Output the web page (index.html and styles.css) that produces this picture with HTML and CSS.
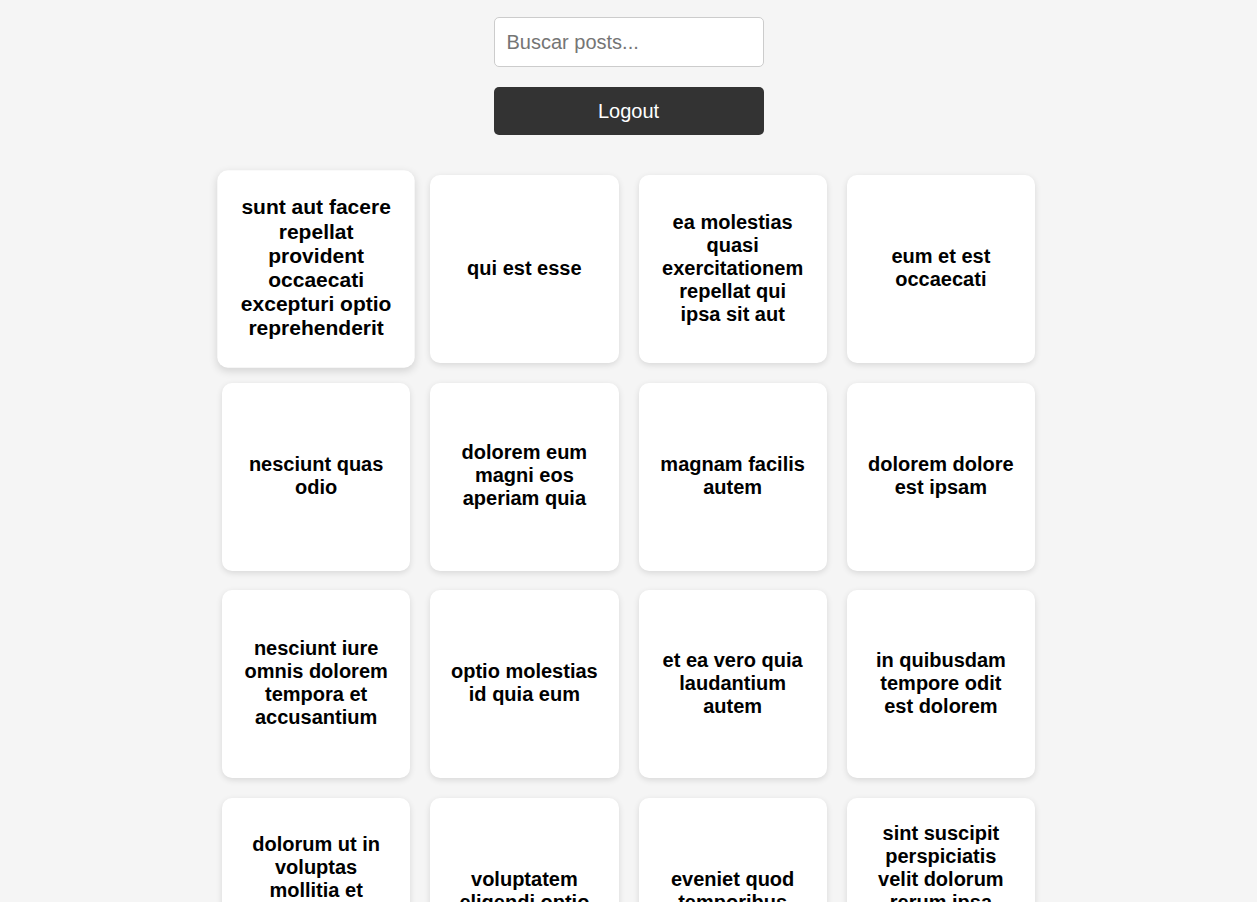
FILE: index.html
```html
<!DOCTYPE html>
<html lang="es">
<head>
<meta charset="utf-8">
<title>Posts</title>
<link rel="stylesheet" href="styles.css">
</head>
<body>
<div class="app">
  <div class="toolbar">
    <input class="search" type="text" placeholder="Buscar posts...">
    <button class="logout" type="button">Logout</button>
  </div>
  <div class="grid">
    <div class="card is-hover"><h2>sunt aut facere repellat provident occaecati excepturi optio reprehenderit</h2></div>
    <div class="card"><h2>qui est esse</h2></div>
    <div class="card"><h2>ea molestias quasi exercitationem repellat qui ipsa sit aut</h2></div>
    <div class="card"><h2>eum et est occaecati</h2></div>
    <div class="card"><h2>nesciunt quas odio</h2></div>
    <div class="card"><h2>dolorem eum magni eos aperiam quia</h2></div>
    <div class="card"><h2>magnam facilis autem</h2></div>
    <div class="card"><h2>dolorem dolore est ipsam</h2></div>
    <div class="card"><h2>nesciunt iure omnis dolorem tempora et accusantium</h2></div>
    <div class="card"><h2>optio molestias id quia eum</h2></div>
    <div class="card"><h2>et ea vero quia laudantium autem</h2></div>
    <div class="card"><h2>in quibusdam tempore odit est dolorem</h2></div>
    <div class="card"><h2>dolorum ut in voluptas mollitia et saepe quo animi</h2></div>
    <div class="card"><h2>voluptatem eligendi optio</h2></div>
    <div class="card"><h2>eveniet quod temporibus</h2></div>
    <div class="card"><h2>sint suscipit perspiciatis velit dolorum rerum ipsa laboriosam odio</h2></div>
    <div class="card"><h2>fugit voluptas sed molestias voluptatem provident</h2></div>
    <div class="card"><h2>voluptate et itaque vero tempora molestiae</h2></div>
    <div class="card"><h2>adipisci placeat illum aut reiciendis qui</h2></div>
    <div class="card"><h2>doloribus ad provident suscipit at</h2></div>
  </div>
</div>
</body>
</html>
```

FILE: styles.css
```css
html, body {
  margin: 0;
  padding: 0;
  background: #f5f5f5;
  font-family: "Liberation Sans", Arial, sans-serif;
}

.app {
  display: flex;
  flex-direction: column;
  align-items: center;
  padding-top: 17px;
  padding-bottom: 40px;
}

.toolbar {
  display: flex;
  flex-direction: column;
  align-items: center;
  gap: 20px;
  margin-bottom: 40px;
}

.search {
  box-sizing: border-box;
  width: 270px;
  height: 50px;
  padding: 0 12px;
  border: 1px solid #cccccc;
  border-radius: 5px;
  background: #ffffff;
  font-family: "Liberation Sans", Arial, sans-serif;
  font-size: 20px;
  color: #222;
  outline: none;
}

.search::placeholder {
  color: #757575;
}

.logout {
  box-sizing: border-box;
  width: 270px;
  height: 48px;
  border: none;
  border-radius: 5px;
  background: #333333;
  color: #ffffff;
  font-family: "Liberation Sans", Arial, sans-serif;
  font-size: 20px;
  cursor: pointer;
}

.grid {
  display: grid;
  grid-template-columns: repeat(4, 1fr);
  column-gap: 20px;
  row-gap: 19.67px;
  width: 813px;
}

.card {
  box-sizing: border-box;
  height: 188px;
  padding: 19px 20px 21px;
  background: #ffffff;
  border-radius: 10px;
  box-shadow: 0 2px 6px rgba(0, 0, 0, 0.12);
  display: flex;
  align-items: center;
  justify-content: center;
  text-align: center;
  transition: transform 0.2s;
}

.card.is-hover {
  transform: scale(1.05);
  box-shadow: 0 3px 8px rgba(0, 0, 0, 0.14);
}

.card h2 {
  margin: 0;
  font-size: 20px;
  font-weight: bold;
  line-height: 23px;
  color: #000000;
}
```
